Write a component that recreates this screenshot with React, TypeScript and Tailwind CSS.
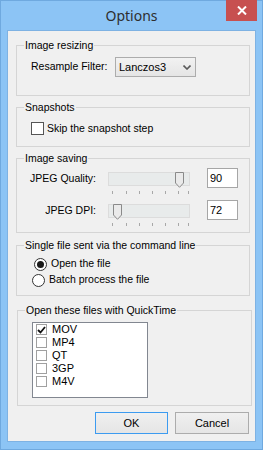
import React from "react";

const font = { fontFamily: '"Liberation Sans", Arial, sans-serif' };

const Group: React.FC<{ title: string; className: string; children?: React.ReactNode }> = ({ title, className, children }) => (
  <div className={`relative border border-[#d5d5d5] ${className}`}>
    <span className="absolute -top-[7px] left-[7px] bg-[#f0f0f0] px-px leading-[13px] whitespace-nowrap">{title}</span>
    {children}
  </div>
);

const tickMargins = ["ml-[4px]", "ml-[13px]", "ml-[12px]", "ml-[12px]", "ml-[12px]", "ml-[12px]", "ml-[9px]"];

const Thumb = () => (
  <svg width="9" height="16" viewBox="0 0 9 16" className="block">
    <path d="M0.5 0.5 H8.5 V11 L4.5 15.3 L0.5 11 Z" fill="#eaeaea" stroke="#8a8a8a" />
  </svg>
);

const SliderRow: React.FC<{ label: string; value: string; thumb: string }> = ({ label, value, thumb }) => (
  <div className="flex h-[32px] items-start">
    <div className="w-[79px] h-[20px] leading-[20px] text-right">{label}</div>
    <div className="ml-[12px] w-[82px]">
      <div className="relative mt-[4px] h-[14px] bg-[#e8ebeb] border border-[#dcdcdc]">
        <div className={`absolute -top-px ${thumb}`}>
          <Thumb />
        </div>
      </div>
      <div className="mt-[5px] flex h-[3px]">
        {tickMargins.map((m, i) => (
          <div key={i} className={`w-px h-[3px] bg-[#a8a8a8] ${m}`} />
        ))}
      </div>
    </div>
    <div className="ml-[17px] w-[31px] h-[20px] bg-white border border-[#a6a6a6] pl-[2px] leading-[18px] text-[11px]">{value}</div>
  </div>
);

const files = ["MOV", "MP4", "QT", "3GP", "M4V"];

const App: React.FC = () => {
  return (
    <div className="w-[263px] h-[450px] bg-[#8cc4f5] border border-[#6fa9df] text-[10.5px] text-black" style={font}>
      {/* Title bar */}
      <div className="relative h-[29px] flex items-center justify-center">
        <span className="text-[14px] text-[#2e2e2e] pb-[1px]" style={{ fontFamily: '"Noto Sans", "Open Sans", sans-serif' }}>Options</span>
        <div className="absolute -top-px right-[5px] w-[31px] h-[21px] bg-[#c75050] flex items-center justify-center">
          <svg width="10" height="9" viewBox="0 0 10 9">
            <path d="M1 0.5 L9 8.5 M9 0.5 L1 8.5" stroke="white" strokeWidth="2" />
          </svg>
        </div>
      </div>

      {/* Client area */}
      <div className="ml-[6px] w-[249px] h-[412px] bg-[#f0f0f0] border border-[#7eb2e3]">
        <Group title="Image resizing" className="mt-[14px] ml-[8px] w-[234px] h-[51px]">
          <div className="flex items-center pt-[11px] pl-[14px]">
            <div className="w-[84px]">Resample Filter:</div>
            <div className="w-[81px] h-[20px] border border-[#acacac] bg-gradient-to-b from-[#f2f2f2] to-[#e5e5e5] flex items-center justify-between pl-[3px] pr-[4px] text-[11px]">
              <span>Lanczos3</span>
              <svg width="8" height="5" viewBox="0 0 8 5">
                <path d="M0.5 0.5 L4 4 L7.5 0.5" stroke="#5a5a5a" strokeWidth="1.6" fill="none" />
              </svg>
            </div>
          </div>
        </Group>

        <Group title="Snapshots" className="mt-[11px] ml-[8px] w-[234px] h-[40px]">
          <div className="flex items-center pt-[13px] pl-[14px]">
            <div className="w-[13px] h-[13px] border border-[#555] bg-white" />
            <span className="ml-[3px]">Skip the snapshot step</span>
          </div>
        </Group>

        <Group title="Image saving" className="mt-[11px] ml-[8px] w-[234px] h-[75px]">
          <div className="pt-[9px]">
            <SliderRow label="JPEG Quality:" value="90" thumb="left-[66px]" />
            <SliderRow label="JPEG DPI:" value="72" thumb="left-[4px]" />
          </div>
        </Group>

        <Group title="Single file sent via the command line" className="mt-[12px] ml-[8px] w-[234px] h-[51px]">
          <div className="pt-[10px]">
            <div className="flex items-center h-[16px] pl-[17px]">
              <div className="w-[13px] h-[13px] rounded-full border border-[#333] bg-white flex items-center justify-center">
                <div className="w-[7px] h-[7px] rounded-full bg-[#1a1a1a]" />
              </div>
              <span className="ml-[4px]">Open the file</span>
            </div>
            <div className="flex items-center h-[16px] pl-[15px]">
              <div className="w-[13px] h-[13px] rounded-full border border-[#333] bg-white" />
              <span className="ml-[4px]">Batch process the file</span>
            </div>
          </div>
        </Group>

        <Group title="Open these files with QuickTime" className="mt-[14px] ml-[9px] w-[235px] h-[96px]">
          <div className="pt-[11px] pl-[14px]">
            <div className="w-[116px] h-[76px] bg-white border border-[#828790]">
              {files.map((f, i) => (
                <div key={f} className="flex items-center h-[13px] pl-[3px]">
                  <div className="w-[11px] h-[11px] border border-[#a0a0a0] bg-white flex items-center justify-center">
                    {i === 0 && (
                      <svg width="9" height="8" viewBox="0 0 9 8">
                        <path d="M1 4 L3.5 6.5 L8 1" stroke="#111" strokeWidth="1.8" fill="none" />
                      </svg>
                    )}
                  </div>
                  <span className="ml-[5px] text-[11px]">{f}</span>
                </div>
              ))}
            </div>
          </div>
        </Group>

        <div className="mt-[6px] flex justify-end gap-[7px] pr-[6px]">
          <button className="w-[73px] h-[22px] border border-[#3c9bf0] bg-gradient-to-b from-[#f0f0f0] to-[#e5e5e5] text-[11px]">OK</button>
          <button className="w-[74px] h-[22px] border border-[#acacac] bg-gradient-to-b from-[#f0f0f0] to-[#e5e5e5] text-[11px]">Cancel</button>
        </div>
      </div>
    </div>
  );
};

export default App;
